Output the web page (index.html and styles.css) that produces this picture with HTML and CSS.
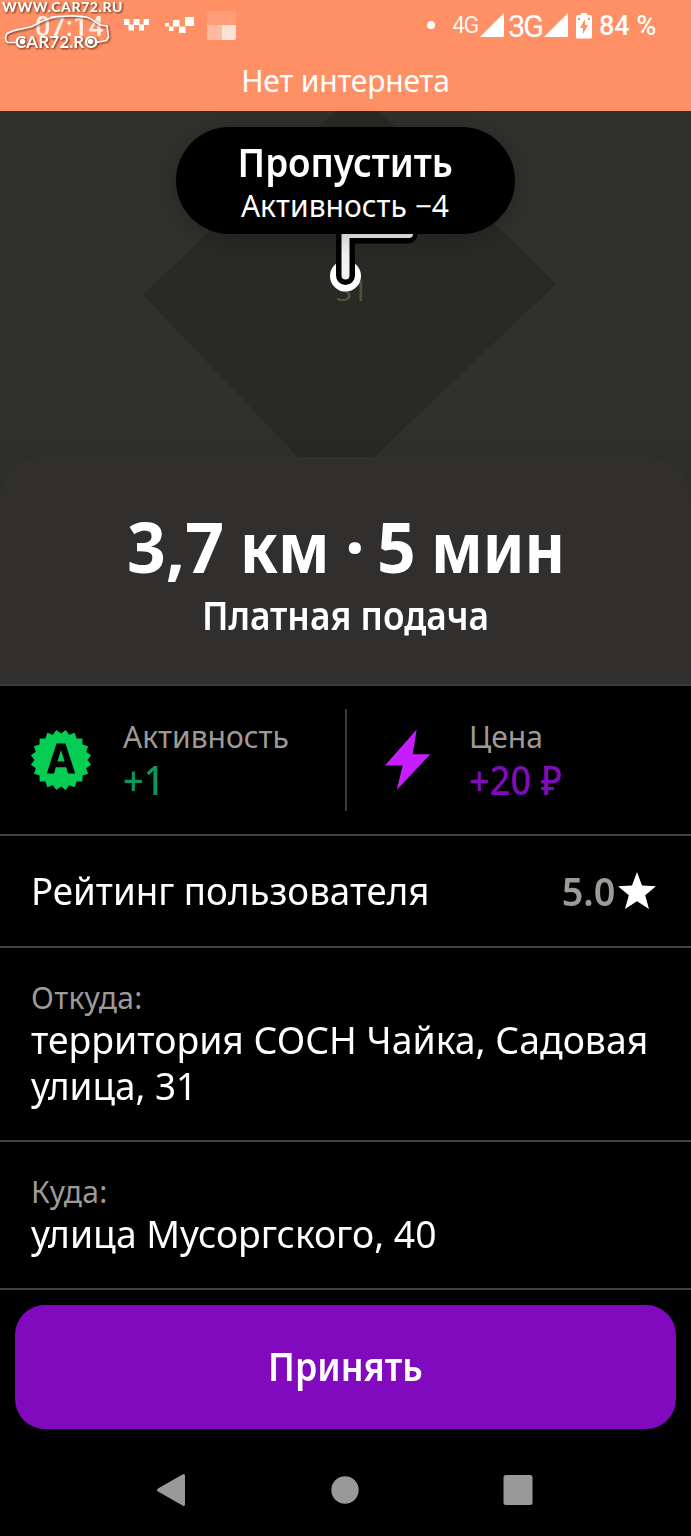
FILE: index.html
```html
<!DOCTYPE html>
<html lang="ru">
<head>
<meta charset="utf-8">
<title>Заказ</title>
<link rel="stylesheet" href="styles.css">
</head>
<body>
<div class="screen">
  <header class="top">
    <div class="status">
      <span class="clock">07:14</span>
      <svg class="ico-w" width="27" height="14" viewBox="0 0 27 14" fill="#fff"><path d="M1 1h5.500v6H1zM10.500 1h6v6h-6zM20.500 1h5.500v6h-5.500zM5.500 6.500h5.500v6H5.500zM16 6.500h5v6h-5z"/></svg>
      <svg class="ico-m" width="30" height="17" viewBox="0 0 30 17" fill="#fff"><path d="M0 6h4v3.500H0zM4 9.500h4.500v4.500H4zM8 3h6.500v6.500H8zM14 9.500h6.500v6.500H14zM20 0h9v9h-9z"/></svg>
      <svg class="ico-sq" width="29" height="29" viewBox="0 0 29 29" fill="#fff"><rect width="29" height="29" rx="2" opacity=".12"/><path d="M0 14h15v15H2a2 2 0 0 1-2-2z" opacity=".3"/><path d="M15 14h14v13a2 2 0 0 1-2 2H15z" opacity=".7"/></svg>
      <span class="dot"></span>
      <span class="net net-4">4G</span>
      <svg class="sig" width="24" height="24" viewBox="0 0 24 24" fill="#fff"><path d="M24 0v24H0z"/></svg>
      <span class="net net-3">3G</span>
      <svg class="sig sig-2" width="24" height="24" viewBox="0 0 24 24" fill="#fff"><path d="M24 0v24H0z"/></svg>
      <svg class="batt" width="16" height="26" viewBox="0 0 16 26" fill="#fff"><path fill-rule="evenodd" d="M5 0h6v2h3a2 2 0 0 1 2 2v20a1.500 1.500 0 0 1-1.500 1.500h-13A1.500 1.500 0 0 1 0 24V4a2 2 0 0 1 2-2h3zM2 5v2h2V5zm10 0v2h2V5zM9 6l-5 9h3v6l5-9H9z"/></svg>
      <span class="pct">84 %</span>
    </div>
    <p class="offline">Нет интернета</p>
    <div class="mark">
      <span class="mark-url">WWW.CAR72.RU</span>
      <svg class="mark-car" width="112" height="36" viewBox="0 0 112 36" fill="none" stroke="#fff" stroke-width="1.700"><path d="M16 29.500H7.500C5 28 5 23 7 20.500 14 16 24 16 32 13.500 40 9 48 5 57 3.500c12-1 24-1 31 1 5 2 8 5 12 7.500l7 1 1.500 11-2 3.500-10.500 2"/><g fill="#fff" stroke="none"><circle cx="22.500" cy="28.500" r="2.800"/><circle cx="90.500" cy="28.500" r="2.800"/></g></svg>
      <span class="mark-name">CAR72.RO</span>
    </div>
  </header>

  <section class="map">
    <svg class="map-art" width="691" height="346" viewBox="0 111 691 346">
      <path d="M336 111h43l177 173-182 173h-76L143 295z" fill="#292a25"/>
      <text class="house" x="336" y="301">31</text>
      <circle cx="345.500" cy="276" r="15.500" fill="#fff"/>
      <path d="M345.500 275.500V234H408" fill="none" stroke="#000" stroke-width="19" stroke-linecap="round"/>
      <path d="M345.500 275.500V234H409" fill="none" stroke="#f2f2f2" stroke-width="8" stroke-linecap="round"/>
    </svg>
    <button class="skip"><span class="skip-title">Пропустить</span><span class="skip-sub">Активность −4</span></button>
  </section>

  <section class="summary">
    <h1 class="distance"><span class="d-num">3,7</span> <span class="d-km">км</span> <span class="d-dot">·</span> <span class="d-five">5</span> <span class="d-min">мин</span></h1>
    <p class="paid">Платная подача</p>
  </section>

  <section class="stats">
    <div class="stat">
      <svg class="stat-ico" width="62" height="62" viewBox="-31 -31 62 62"><path fill="#05cc52" d="M0-26.500 4.700-30.100 8.200-25.200 13.700-27.200 15.600-21.400 21.400-21.600 21.500-15.600 27.100-13.800 25.200-8.200 30.100-4.700 26.500 0 30.100 4.700 25.200 8.200 27.100 13.800 21.500 15.600 21.400 21.600 15.600 21.400 13.700 27.200 8.200 25.200 4.700 30.100 0 26.500-4.700 30.100-8.200 25.200-13.700 27.200-15.600 21.400-21.400 21.600-21.500 15.600-27.100 13.800-25.200 8.200-30.100 4.700-26.500 0-30.100-4.700-25.200-8.200-27.100-13.800-21.500-15.600-21.400-21.600-15.600-21.400-13.700-27.200-8.200-25.200-4.700-30.100z"/><path fill="#000" fill-rule="evenodd" d="M-4.500-16.500h9L14.200 13.500H7L5.200 7.300H-5.200L-7 13.500h-7.200zM0-10-3.600 1.600H3.600z"/></svg>
      <div class="stat-text"><span class="label act">Активность</span><span class="value green">+1</span></div>
    </div>
    <div class="rule"></div>
    <div class="stat stat-price">
      <svg class="stat-ico" width="46" height="62" viewBox="385 729.500 46 62"><path fill="#c81eff" d="M416.700 730 412.700 754.700H430.300L396.700 790.500 402.700 766H385z"/></svg>
      <div class="stat-text"><span class="label price">Цена</span><span class="value violet">+20 ₽</span></div>
    </div>
  </section>

  <section class="row rating">
    <span class="big rate-label">Рейтинг пользователя</span>
    <span class="score"><span class="score-num">5.0</span><svg width="38" height="38" viewBox="0 0 38 38" fill="#fff"><path d="M19 0 24 13.600 38 14.200 27.200 23.200 31 37 19 29.200 7 37 10.800 23.200 0 14.200 14 13.600z"/></svg></span>
  </section>

  <section class="row from">
    <span class="label lab">Откуда:</span>
    <span class="big addr-1">территория СОСН Чайка, Садовая</span>
    <span class="big addr-2">улица, 31</span>
  </section>

  <section class="row to">
    <span class="label lab">Куда:</span>
    <span class="big addr-3">улица Мусоргского, 40</span>
  </section>

  <div class="action"><button class="accept"><span class="accept-text">Принять</span></button></div>

  <nav class="nav">
    <svg width="30" height="34" viewBox="0 0 30 34" fill="#999"><path d="M26.500 1.500Q29 0 29 3V31Q29 34 26.500 32.500L2 18.500Q0 17 2 15.500z"/></svg>
    <svg width="28" height="28" viewBox="0 0 28 28" fill="#999"><circle cx="14" cy="14" r="13.700"/></svg>
    <svg width="30" height="30" viewBox="0 0 30 30" fill="#999"><rect x=".5" width="29" height="30" rx="2.500"/></svg>
  </nav>
</div>
</body>
</html>
```

FILE: styles.css
```css
* { box-sizing: border-box; }
body { margin: 0; background: #000; }
p, h1 { margin: 0; }
button { border: 0; padding: 0; }
.screen {
  width: 691px; height: 1536px; overflow: hidden;
  display: flex; flex-direction: column;
  background: #000; color: #fff;
  font-family: "Noto Sans", "Open Sans", sans-serif;
}
.screen span, .screen p, .screen h1 { white-space: nowrap; }
svg { display: block; flex: none; }

.top { position: relative; height: 111px; background: #ff9066; }
.status { display: flex; align-items: flex-start; height: 52px; padding-left: 35px; font-family: Roboto, sans-serif; }
.clock { width: 88px; font-size: 27px; font-weight: 500; line-height: 54px; opacity: .85; }
.ico-w { margin-top: 18px; }
.ico-m { margin: 17px 0 0 15px; }
.ico-sq { margin: 11px 0 0 12px; }
.dot { width: 8px; height: 8px; margin: 21px 0 0 191px; border-radius: 50%; background: #fff; }
.net { line-height: 52px; }
.net-4 { width: 28px; margin-left: 17px; font-size: 23px; letter-spacing: -1.500px; opacity: .9; }
.net-3 { width: 36px; margin-left: 4px; font-size: 31px; letter-spacing: -2.500px; line-height: 53px; }
.sig { margin-top: 13px; }
.batt { margin: 13px 0 0 8px; }
.pct { margin-left: 7px; font-size: 27px; font-weight: 500; line-height: 53px; }
.offline { text-align: center; font-size: 30px; line-height: 58px; letter-spacing: -.2px; }
.mark { position: absolute; left: 0; top: 0; width: 130px; height: 54px; font-family: Lato, sans-serif; filter: drop-shadow(1px 1px 1px rgba(80, 30, 10, .9)); }
.mark-url { position: absolute; left: 2px; top: -2px; font-size: 14px; font-weight: 900; line-height: 17px; letter-spacing: .6px; }
.mark-car { position: absolute; left: 0; top: 13px; }
.mark-name { position: absolute; left: 15px; top: 31px; font-size: 17px; font-weight: 700; line-height: 21px; letter-spacing: .1px; }

.map {
  position: relative; height: 346px; padding-top: 16px;
  display: flex; justify-content: center; align-items: flex-start;
  background: #30312c;
}
.map::after { content: ""; position: absolute; left: 0; right: 0; bottom: 0; height: 40px; background: linear-gradient(transparent, rgba(0, 0, 0, .06)); }
.map-art { position: absolute; left: 0; top: 0; }
.house { font-family: "Noto Sans", sans-serif; font-size: 28px; fill: #55513f; }
.skip {
  position: relative; width: 339px; height: 107px; margin-right: 1px; border-radius: 54px;
  display: flex; flex-direction: column; align-items: center;
  background: #000; color: #fff; font-family: inherit;
  box-shadow: 0 4px 24px rgba(0, 0, 0, .22);
}
.skip-title { margin-top: 10px; font-size: 39px; font-weight: 600; line-height: 50px; transform: scaleX(.943); }
.skip-sub { font-size: 30px; line-height: 37px; }

.summary {
  position: relative; height: 229px; padding-top: 47px; border-radius: 44px 44px 0 0;
  border-bottom: 2px solid #3e3d3b; background: #312f2e; text-align: center;
  box-shadow: 0 0 0 60px #2d2e29; clip-path: inset(0);
}
.distance { display: flex; height: 85px; padding-left: 127px; font-size: 70px; font-weight: 700; line-height: 84px; }
.distance span { display: block; text-align: left; transform-origin: left; }
.d-num { width: 113px; transform: scaleX(.97); }
.d-km { width: 105px; transform: scaleX(.88); }
.d-dot { width: 32px; }
.d-five { width: 54px; transform: scaleX(.97); }
.d-min { width: 150px; transform: scaleX(.885); }
.paid { font-size: 39px; font-weight: 600; line-height: 52px; transform: scaleX(.905); }

.stats { display: flex; height: 150px; padding-left: 30px; align-items: center; border-bottom: 2px solid #42423f; }
.stat { display: flex; align-items: center; width: 315px; }
.stat-text { display: flex; flex-direction: column; margin-left: 31px; }
.rule { width: 2px; height: 102px; background: #3a3a38; }
.stat-price { padding-left: 38px; }
.stat-price .stat-text { margin-left: 38px; }
.label { color: #9e9a96; font-size: 30px; line-height: 40px; }
.value { font-size: 39px; font-weight: 500; line-height: 46px; transform: scaleX(.93); transform-origin: left; }
.green { color: #07995f; }
.violet { color: #820abe; }

.row { padding: 0 31px; border-bottom: 2px solid #42423f; }
.big { font-size: 39px; line-height: 46px; transform-origin: left; }
.rating { display: flex; justify-content: space-between; align-items: center; height: 112px; padding: 0 35px 1px 31px; }
.rate-label { margin-top: -2px; transform: scaleX(.941); }
.score { display: flex; align-items: center; gap: 3px; }
.score-num { color: #9e9a96; font-size: 39px; font-weight: 600; line-height: 46px; transform: scaleX(.97); transform-origin: right; }
.from, .to { display: flex; flex-direction: column; align-items: flex-start; padding-top: 30px; }
.from { height: 194px; }
.to { height: 148px; }
.lab { margin-bottom: -2px; letter-spacing: .3px; }
.addr-1 { transform: scaleX(.958); }
.addr-2 { transform: scaleX(.945); }
.addr-3 { transform: scaleX(.955); }

.action { padding: 15px 15px 0; }
.accept { display: block; width: 661px; height: 124px; border-radius: 30px; background: #820abe; color: #fff; font-family: inherit; font-size: 39px; font-weight: 600; }
.accept-text { display: block; margin-top: -3px; transform: scaleX(.917); }
.nav { display: flex; align-items: center; justify-content: space-between; height: 34px; margin-top: 44px; padding: 0 158px 0 156px; }
```
